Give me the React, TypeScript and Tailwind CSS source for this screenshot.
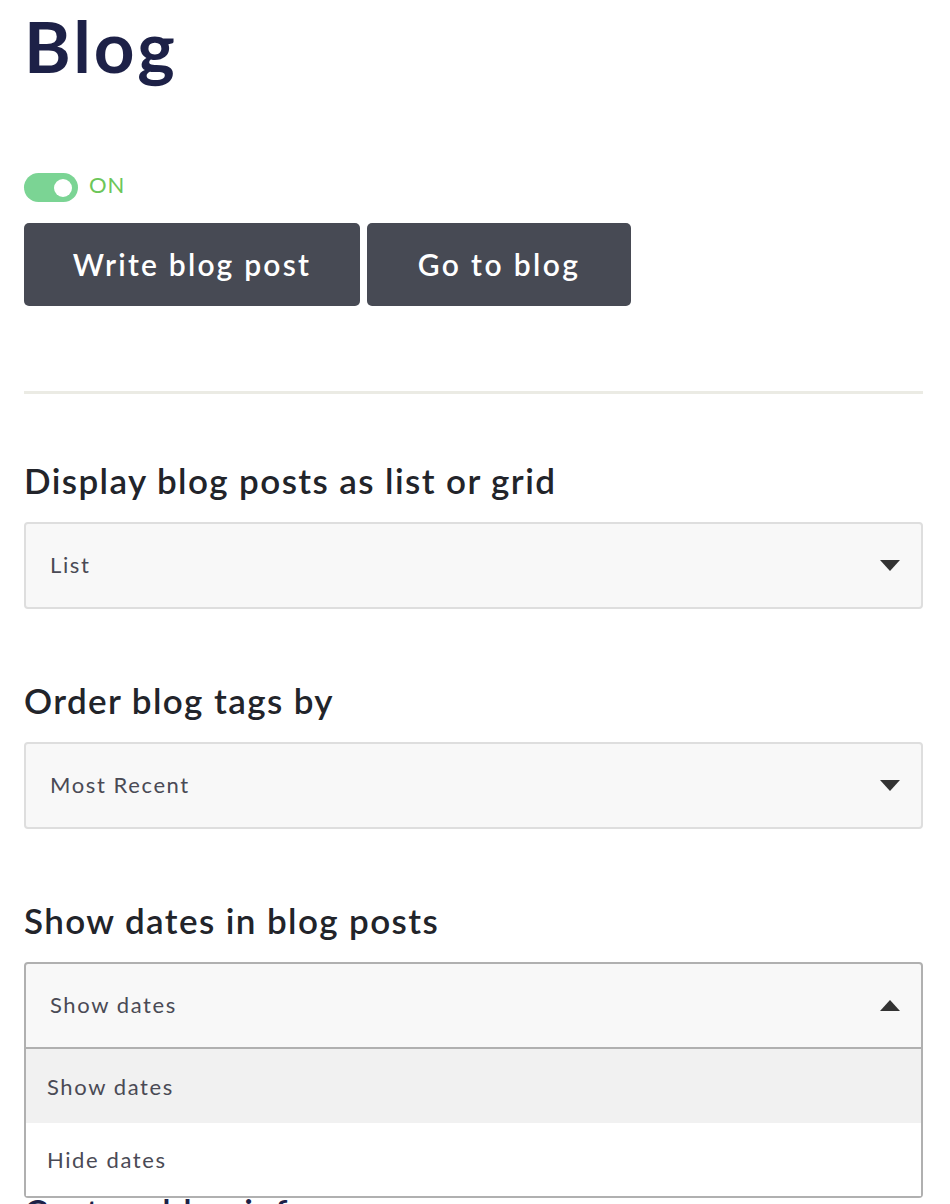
import React from "react";

function Caret({ up }: { up?: boolean }) {
  return (
    <svg width="20" height="11" viewBox="0 0 20 11" className="shrink-0">
      {up ? (
        <polygon points="0,11 20,11 10,0" fill="#333333" />
      ) : (
        <polygon points="0,0 20,0 10,11" fill="#333333" />
      )}
    </svg>
  );
}

function SelectBox({ value, open }: { value: string; open?: boolean }) {
  return (
    <div className="relative">
      <div
        className={`h-[87px] flex items-center justify-between pl-[24px] pr-[21px] bg-[#f8f8f8] border-2 ${
          open ? "border-[#b0b0b0] rounded-t-[4px]" : "border-[#dedede] rounded-[4px]"
        }`}
      >
        <span className="text-[22px] text-[#4a4a55] tracking-[1.6px] -mt-[2px]">{value}</span>
        <Caret up={open} />
      </div>
      {open && (
        <div className="absolute left-0 right-0 top-full z-10 bg-white border-2 border-t-0 border-[#b0b0b0] rounded-b-[4px]">
          <div className="h-[74px] flex items-center pl-[21px] bg-[#f1f1f1] text-[22px] text-[#4a4a55] tracking-[1.6px]">
            Show dates
          </div>
          <div className="h-[73px] flex items-center pl-[21px] bg-white text-[22px] text-[#4a4a55] tracking-[1.6px]">
            Hide dates
          </div>
        </div>
      )}
    </div>
  );
}

export default function App() {
  return (
    <div className="min-h-[1204px] bg-white px-[24px] pt-[10px] font-['Lato',sans-serif] overflow-hidden w-[950px]">
      <h1 className="text-[71px] leading-none font-bold text-[#1d2147] tracking-[3px]">Blog</h1>

      {/* toggle */}
      <div className="mt-[92px] flex items-center gap-[11px]">
        <div className="w-[54px] h-[29px] rounded-full bg-[#7bd494] flex items-center justify-end pr-[6px]">
          <div className="w-[18px] h-[18px] rounded-full bg-white" />
        </div>
        <span className="text-[22px] leading-none text-[#6cc65a] tracking-[1px] -mt-[5px]">ON</span>
      </div>

      <div className="mt-[21px] flex gap-[7px]">
        <button className="w-[336px] h-[83px] rounded-[5px] bg-[#474a54] text-white text-[30px] font-semibold tracking-[2.2px]">
          Write blog post
        </button>
        <button className="w-[264px] h-[83px] rounded-[5px] bg-[#474a54] text-white text-[30px] font-semibold tracking-[2.4px]">
          Go to blog
        </button>
      </div>

      <div className="mt-[85px] mr-[3px] h-[3px] bg-[#ebebe4]" />

      <div className="mr-[3px]">
        <h2 className="mt-[69px] mb-[24px] text-[35px] leading-none font-semibold text-[#22242a] tracking-[1.4px]">
          Display blog posts as list or grid
        </h2>
        <SelectBox value="List" />

        <h2 className="mt-[74px] mb-[24px] text-[35px] leading-none font-semibold text-[#22242a] tracking-[1.4px]">
          Order blog tags by
        </h2>
        <SelectBox value="Most Recent" />

        <h2 className="mt-[74px] mb-[24px] text-[35px] leading-none font-semibold text-[#22242a] tracking-[1.4px]">
          Show dates in blog posts
        </h2>
        <SelectBox value="Show dates" open />

        <h2 className="mt-[145px] text-[35px] leading-none font-semibold text-[#1d2147] tracking-[1.4px]">
          Custom blog info
        </h2>
      </div>
    </div>
  );
}
